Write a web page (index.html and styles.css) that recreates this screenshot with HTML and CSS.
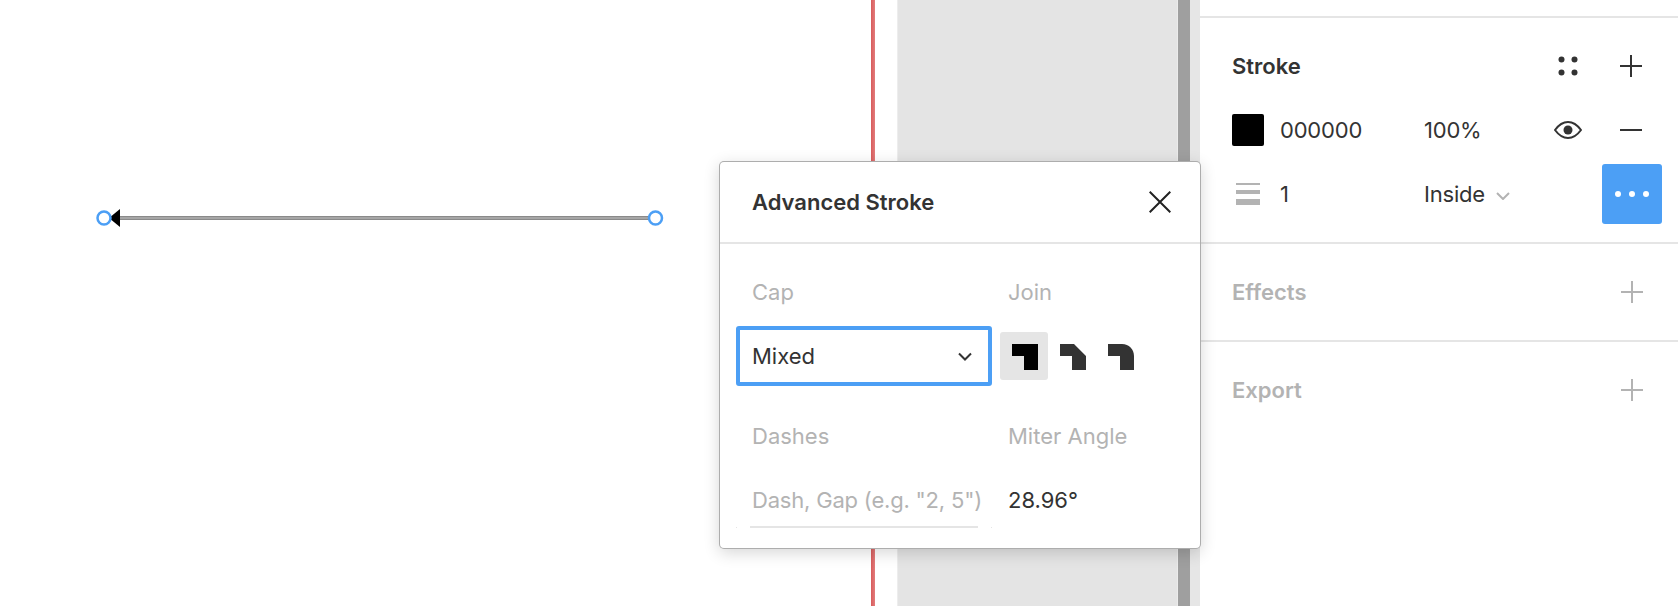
FILE: index.html
```html
<!DOCTYPE html>
<html lang="en">
<head>
<meta charset="utf-8">
<title>Advanced Stroke</title>
<link rel="stylesheet" href="styles.css">
</head>
<body>
<div class="app">
  <main class="canvas">
    <div class="artboard">
      <svg class="vector" width="600" height="60" viewBox="0 0 600 60" aria-hidden="true">
        <rect x="24" y="26" width="536" height="4" fill="#8a8a8a"/>
        <rect x="24" y="27" width="536" height="2" fill="#a6a6a6"/>
        <path d="M19 28 L30 19 V37 Z" fill="#000"/>
        <circle cx="14" cy="28" r="6.500" fill="#fff" stroke="#4c9ff5" stroke-width="2.500"/>
        <circle cx="565.500" cy="28" r="6.500" fill="#fff" stroke="#4c9ff5" stroke-width="2.500"/>
      </svg>
    </div>
    <div class="guide"></div>
    <div class="gutter"></div>
    <div class="frame">
      <div class="thumb"></div>
      <div class="track"></div>
    </div>
  </main>

  <aside class="panel">
    <div class="section top-section"></div>
    <section class="section stroke-section">
      <div class="row">
        <h2 class="title span-3">Stroke</h2>
        <div class="cell-icon">
          <svg width="22" height="22" viewBox="0 0 22 22" aria-hidden="true"><g fill="#333"><circle cx="4.500" cy="4.500" r="3"/><circle cx="17.500" cy="4.500" r="3"/><circle cx="4.500" cy="17.500" r="3"/><circle cx="17.500" cy="17.500" r="3"/></g></svg>
        </div>
        <div class="cell-icon">
          <svg width="22" height="22" viewBox="0 0 22 22" aria-hidden="true"><path d="M0 11H22M11 0V22" stroke="#333" stroke-width="2" fill="none"/></svg>
        </div>
      </div>
      <div class="row">
        <div class="swatch"></div>
        <span class="value">000000</span>
        <span class="value">100%</span>
        <div class="cell-icon">
          <svg width="28" height="18" viewBox="0 0 28 18" aria-hidden="true"><path d="M1 9C5 3.500 9.500 1 14 1S23 3.500 27 9C23 14.500 18.500 17 14 17S5 14.500 1 9Z" fill="none" stroke="#333" stroke-width="2"/><circle cx="14" cy="9" r="4.500" fill="#333"/></svg>
        </div>
        <div class="cell-icon">
          <svg width="22" height="22" viewBox="0 0 22 22" aria-hidden="true"><path d="M0 11H22" stroke="#333" stroke-width="2" fill="none"/></svg>
        </div>
      </div>
      <div class="row">
        <div class="weight-icon">
          <span class="bar bar-thin"></span>
          <span class="bar bar-mid"></span>
          <span class="bar bar-thick"></span>
        </div>
        <span class="value">1</span>
        <span class="value with-chevron">Inside
          <svg class="chev-inside" width="14" height="8" viewBox="0 0 14 8" aria-hidden="true"><path d="M1 1L7 7L13 1" fill="none" stroke="#b3b3b3" stroke-width="2"/></svg>
        </span>
        <div></div>
        <button class="more" type="button" aria-label="Advanced stroke">
          <i class="dot"></i><i class="dot"></i><i class="dot"></i>
        </button>
      </div>
    </section>
    <section class="section muted-section">
      <h2 class="title muted">Effects</h2>
      <svg width="22" height="22" viewBox="0 0 22 22" aria-hidden="true"><path d="M0 11H22M11 0V22" stroke="#b3b3b3" stroke-width="2" fill="none"/></svg>
    </section>
    <section class="section muted-section last">
      <h2 class="title muted">Export</h2>
      <svg width="22" height="22" viewBox="0 0 22 22" aria-hidden="true"><path d="M0 11H22M11 0V22" stroke="#b3b3b3" stroke-width="2" fill="none"/></svg>
    </section>
  </aside>
</div>

<div class="popup">
  <header class="popup-head">
    <h2 class="title">Advanced Stroke</h2>
    <svg width="22" height="22" viewBox="0 0 22 22" aria-hidden="true"><path d="M0.700 0.700L21.300 21.300M21.300 0.700L0.700 21.300" stroke="#222" stroke-width="2" fill="none"/></svg>
  </header>
  <div class="popup-body">
    <span class="label pad-left">Cap</span>
    <span class="label pad-join">Join</span>
    <div class="select">
      <span>Mixed</span>
      <svg width="14" height="9" viewBox="0 0 14 9" aria-hidden="true"><path d="M1 1.500L7 7.500L13 1.500" fill="none" stroke="#333" stroke-width="2"/></svg>
    </div>
    <div class="joins">
      <div class="join join-active">
        <svg width="26" height="26" viewBox="0 0 26 26" aria-hidden="true"><path d="M0 0H26V26H12V12H0Z" fill="#000"/></svg>
      </div>
      <div class="join">
        <svg width="26" height="26" viewBox="0 0 26 26" aria-hidden="true"><path d="M0 0H14L26 12V26H12V12H0Z" fill="#333"/></svg>
      </div>
      <div class="join">
        <svg width="26" height="26" viewBox="0 0 26 26" aria-hidden="true"><path d="M0 0H14C21 0 26 5 26 12V26H12V12H0Z" fill="#333"/></svg>
      </div>
    </div>
    <span class="label pad-left lower-label">Dashes</span>
    <span class="label pad-join lower-label">Miter Angle</span>
    <div class="dash-input"><span class="label placeholder">Dash, Gap (e.g. "2, 5")</span></div>
    <span class="angle">28.96°</span>
  </div>
</div>
</body>
</html>
```
FILE: styles.css
```css
* { box-sizing: border-box; }
html, body { margin: 0; height: 100%; overflow: hidden; background: #fff; }
body { font-family: Inter, "Liberation Sans", sans-serif; font-size: 22px; color: #333; }
h2 { margin: 0; }

.app { display: flex; height: 606px; }

.canvas { display: flex; width: 1200px; }
.artboard { position: relative; width: 871px; background: #fff; }
.vector { position: absolute; left: 90px; top: 190px; }
.guide { width: 4px; background: linear-gradient(90deg, #d85c5c, #e27c7c); }
.gutter { width: 22px; background: #fff; }
.frame { display: flex; justify-content: flex-end; flex: 1; background: #e4e4e4; border-left: 1px solid #ededed; }
.thumb { width: 13px; background: #9f9f9f; border-left: 1px solid #ebebeb; }
.track { width: 10px; background: #e6e6e6; }

.panel { width: 478px; }
.section { border-bottom: 2px solid #e5e5e5; }
.top-section { height: 18px; }
.stroke-section { display: flex; flex-direction: column; gap: 4px; height: 226px; padding: 18px 16px 0 32px; }
.row { display: grid; grid-template-columns: 48px 144px 112px 64px 62px; height: 60px; align-items: center; }
.span-3 { grid-column: span 3; }
.title { font-size: 22px; font-weight: 600; line-height: 28px; color: #333; }
.muted { color: #b3b3b3; }
.value { font-size: 22px; line-height: 28px; letter-spacing: -.2px; white-space: nowrap; }
.with-chevron { display: flex; align-items: center; gap: 11px; }
.chev-inside { margin-top: 3px; }
.cell-icon { display: flex; justify-content: center; align-items: center; }
.swatch { width: 32px; height: 32px; background: #000; border-radius: 2px; }
.weight-icon { display: flex; flex-direction: column; gap: 5px; width: 24px; margin-left: 4px; }
.bar { display: block; background: #b3b3b3; }
.bar-thin { height: 2px; }
.bar-mid { height: 4px; }
.bar-thick { height: 6px; }
.more { display: flex; justify-content: center; align-items: center; gap: 8px; justify-self: end; width: 60px; height: 60px; padding: 0; border: 0; border-radius: 3px; background: #4c9ff5; }
.dot { width: 6px; height: 6px; border-radius: 50%; background: #fff; }
.muted-section { display: flex; justify-content: space-between; align-items: center; height: 98px; padding: 0 35px 0 32px; }
.last { height: 96px; border-bottom: 0; }

.popup { position: absolute; left: 719px; top: 161px; width: 482px; height: 388px; background: #fff; border: 1px solid rgba(0, 0, 0, .32); border-radius: 5px; box-shadow: 0 4px 16px rgba(0, 0, 0, .16); }
.popup-head { display: flex; justify-content: space-between; align-items: center; height: 82px; padding: 0 29px 0 32px; border-bottom: 2px solid #e5e5e5; }
.popup-body { display: grid; grid-template-columns: 256px 1fr; grid-template-rows: 36px 60px 36px 60px; column-gap: 8px; row-gap: 16px; padding: 30px 0 0 16px; }
.label { font-size: 22px; line-height: 36px; color: #b3b3b3; white-space: nowrap; }
.placeholder { letter-spacing: -.2px; }
.pad-left { padding-left: 16px; }
.pad-join { padding-left: 8px; }
.lower-label { margin-top: 16px; }
.select { display: flex; justify-content: space-between; align-items: center; height: 60px; padding: 0 16px 0 12px; border: 4px solid #4c9ff5; border-radius: 3px; font-size: 22px; }
.joins { display: flex; align-items: center; }
.join { display: flex; justify-content: center; align-items: center; width: 48px; height: 48px; border-radius: 3px; }
.join svg { margin: 2px 0 0 2px; }
.join-active { background: #e5e5e5; }
.dash-input { position: relative; height: 60px; margin-top: 16px; padding: 12px 0 0 16px; }
.dash-input::before { content: ""; position: absolute; left: 0; right: 0; bottom: 2px; height: 1px; background: linear-gradient(90deg, #e5e5e5 1px, transparent 1px, transparent 255px, #e5e5e5 255px); }
.dash-input::after { content: ""; position: absolute; left: 14px; right: 14px; bottom: 2px; height: 2px; background: #e5e5e5; }
.angle { margin-top: 16px; padding: 12px 0 0 8px; font-size: 22px; line-height: 36px; color: #333; }
```
